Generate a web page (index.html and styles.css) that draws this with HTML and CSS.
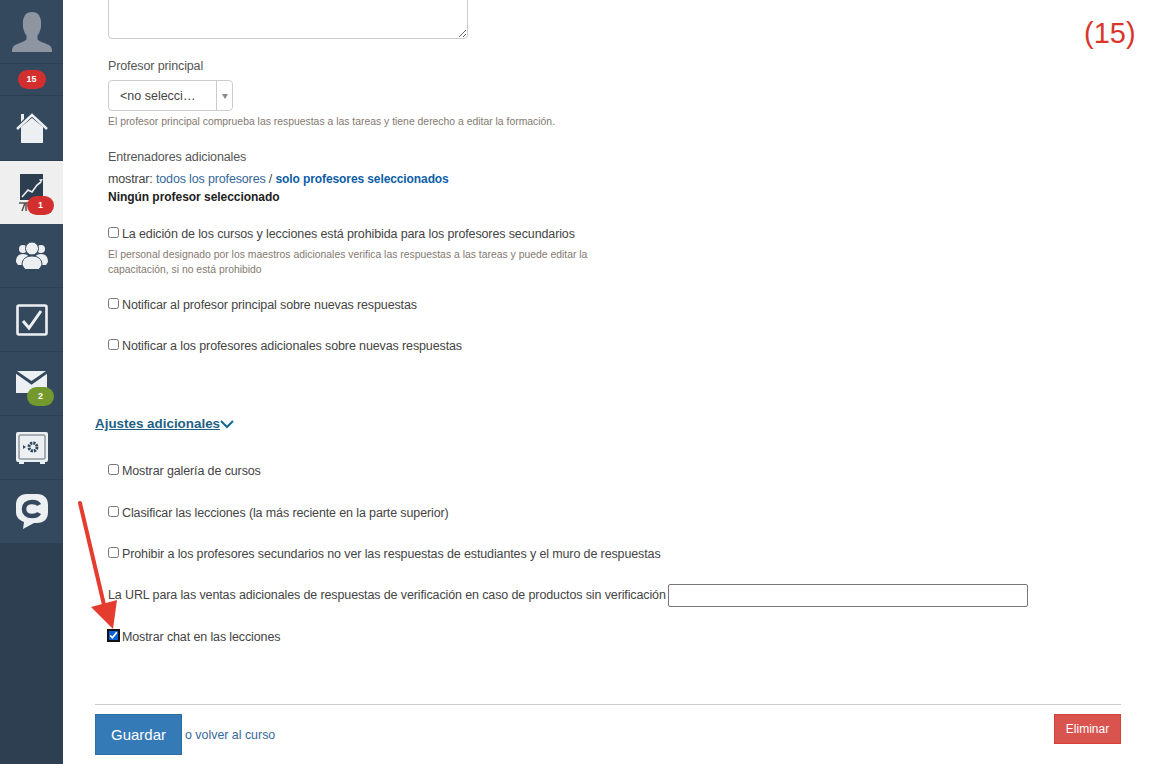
FILE: index.html
```html
<!DOCTYPE html>
<html lang="es">
<head>
<meta charset="utf-8">
<title>Ajustes del curso</title>
<link rel="stylesheet" href="styles.css">
</head>
<body>
<div class="app">
  <nav class="sidebar">
    <a class="nav-item nav-avatar">
      <svg width="42" height="40" viewBox="0 0 46 42" preserveAspectRatio="none"><path fill="#8d96a0" d="M23 0c7 0 10 5 10 12 0 5-1 9-4 13v3c0 3 8 4 13 7 2 1 3 4 3 7H1c0-3 1-6 3-7 5-3 13-4 13-7v-3c-3-4-4-8-4-13C13 5 16 0 23 0z"/></svg>
    </a>
    <a class="nav-item nav-count"><span class="badge badge-red badge-small">15</span></a>
    <a class="nav-item nav-home">
      <svg width="32" height="32" viewBox="0 0 32 32"><path fill="#edf0f2" d="M5 15 16 6l11 9v16H5z"/><path fill="none" stroke="#edf0f2" stroke-width="2.400" d="M1 17 16 3l15 14"/><path fill="#edf0f2" d="M5 2h3v5l-3 3z"/></svg>
    </a>
    <a class="nav-item nav-active">
      <svg width="26" height="38" viewBox="0 0 26 38"><path fill="#2c3e50" d="M1 0h23v26H1z"/><path fill="none" stroke="#edf0f2" stroke-width="1.600" d="m3 23 6-7 4 2 5-7 4-3"/><path fill="#edf0f2" d="m24 5-4 .5 2 3z"/><path fill="none" stroke="#555" stroke-width="1.500" d="M0 29h24M6 29l-3 8M7 29v8"/></svg>
      <span class="badge badge-red badge-over">1</span>
    </a>
    <a class="nav-item">
      <svg width="32" height="28" viewBox="0 0 32 28"><g fill="#edf0f2"><circle cx="7" cy="7" r="4"/><circle cx="25" cy="7" r="4"/><path d="M0 20c0-5 2-8 7-8s7 3 7 8l-2 3H2zM18 20c0-5 2-8 7-8s7 3 7 8l-2 3H20z"/></g><circle cx="16" cy="6.500" r="6.500" fill="#edf0f2" stroke="#34495e" stroke-width="1"/><path fill="#edf0f2" stroke="#34495e" d="M6 23c0-6 4-9 10-9s10 3 10 9l-3 4.500H9z"/></svg>
    </a>
    <a class="nav-item">
      <svg width="32" height="32" viewBox="0 0 32 32"><rect x="1.500" y="1.500" width="29" height="29" rx="1.500" fill="none" stroke="#edf0f2" stroke-width="2.600"/><path fill="none" stroke="#edf0f2" stroke-width="3" d="m7 17 6 7L25 7"/></svg>
    </a>
    <a class="nav-item">
      <svg class="mail-icon" width="31" height="22" viewBox="0 0 32 24" preserveAspectRatio="none"><path fill="#edf0f2" d="M0 3v21h32V3L16 15z"/><path fill="#edf0f2" d="M1 0h30L16 11z"/></svg>
      <span class="badge badge-green badge-over">2</span>
    </a>
    <a class="nav-item">
      <svg width="32" height="32" viewBox="0 0 32 32"><rect y="0" width="32" height="30" rx="2" fill="#edf0f2"/><rect x="3" y="3" width="26" height="24" rx="1" fill="none" stroke="#5b6b7b" stroke-width="1"/><circle cx="17" cy="15" r="4" fill="none" stroke="#34495e" stroke-width="3" stroke-dasharray="2.200 .9"/><path fill="#34495e" d="m7 13 3 2-3 2z"/><path fill="#edf0f2" d="M3 30h5v2H3zM24 30h5v2h-5z"/></svg>
    </a>
    <a class="nav-item">
      <svg width="32" height="35" viewBox="0 0 32 35"><path fill="#edf0f2" d="M11 0h10c7 0 11 4 11 11v7c0 7-4 11-11 11h-3l-11 6 1-7c-5-2-8-5-8-10v-7C0 4 4 0 11 0z"/><path fill="none" stroke="#34495e" stroke-width="4.600" d="M23 11c-1-2-3-3-7-3-5 0-8 3-8 7s3 7 8 7c4 0 6-1 7-3"/></svg>
    </a>
  </nav>

  <main class="content">
    <div class="annotation-number">(15)</div>
    <svg class="annotation-arrow" width="44" height="136" viewBox="0 0 44 136"><path fill="none" stroke="#e53c30" stroke-width="4" stroke-linecap="round" d="M3 6 28 112"/><path fill="#e53c30" d="m14 110 26-7-4 29z"/></svg>

    <div class="indented">
      <div class="textarea-clip"><textarea class="textarea"></textarea></div>

      <div class="field-label label-teacher">Profesor principal</div>
      <div class="select"><span class="select-value">&lt;no selecci…</span><span class="select-arrow"></span></div>
      <p class="hint">El profesor principal comprueba las respuestas a las tareas y tiene derecho a editar la formación.</p>

      <div class="field-label label-extra">Entrenadores adicionales</div>
      <div class="show-line">mostrar: <a class="link">todos los profesores</a> / <a class="link-strong">solo profesores seleccionados</a></div>
      <div class="none-selected">Ningún profesor seleccionado</div>

      <label class="check check-forbid"><input type="checkbox">La edición de los cursos y lecciones está prohibida para los profesores secundarios</label>
      <p class="hint hint-wrap">El personal designado por los maestros adicionales verifica las respuestas a las tareas y puede editar la capacitación, si no está prohibido</p>
      <label class="check check-main"><input type="checkbox">Notificar al profesor principal sobre nuevas respuestas</label>
      <label class="check check-next"><input type="checkbox">Notificar a los profesores adicionales sobre nuevas respuestas</label>
    </div>

    <h3 class="section-toggle"><a class="section-link">Ajustes adicionales</a><svg width="14" height="9" viewBox="0 0 14 9"><path fill="none" stroke="#0f6a94" stroke-width="2" d="m1 1 6 6 6-6"/></svg></h3>

    <div class="indented extra-options">
      <label class="check"><input type="checkbox">Mostrar galería de cursos</label>
      <label class="check check-next2"><input type="checkbox">Clasificar las lecciones (la más reciente en la parte superior)</label>
      <label class="check check-next3"><input type="checkbox">Prohibir a los profesores secundarios no ver las respuestas de estudiantes y el muro de respuestas</label>
      <div class="url-row"><span class="url-label">La URL para las ventas adicionales de respuestas de verificación en caso de productos sin verificación</span><input class="url-input" type="text"></div>
      <label class="check check-chat"><input class="focused" type="checkbox" checked>Mostrar chat en las lecciones</label>
    </div>

    <footer class="actions">
      <button class="btn-save" type="button">Guardar</button>
      <span class="back">o <a class="link">volver al curso</a></span>
      <button class="btn-delete" type="button">Eliminar</button>
    </footer>
  </main>
</div>
</body>
</html>
```

FILE: styles.css
```css
* { box-sizing: border-box; }
html, body { margin: 0; height: 100%; overflow: hidden; background: #fff; }
body { font-family: "Liberation Sans", Arial, sans-serif; font-size: 12.500px; letter-spacing: -0.12px; line-height: 18px; color: #444; }

.app { display: flex; height: 764px; }

.sidebar { flex: 0 0 63px; background: #2e3f51; display: flex; flex-direction: column; }
.nav-item { position: relative; flex: 0 0 64px; display: flex; align-items: center; justify-content: center; background: #34495e; border-bottom: 1px solid #2c3e50; }
.nav-avatar { flex-basis: 64px; padding-top: 1px; }
.nav-count { flex-basis: 32px; }
.nav-home { flex-basis: 65px; }
.nav-active { flex-basis: 63px; background: #efefef; border-bottom: 0; }
.mail-icon { margin-top: -4px; }

.badge { display: flex; align-items: center; justify-content: center; border-radius: 10px; color: #fff; font-size: 9px; font-weight: 700; line-height: 1; letter-spacing: 0; }
.badge-small { width: 28px; height: 19px; }
.badge-red { background: #d32f2f; }
.badge-green { background: #74992e; }
.badge-over { position: absolute; left: 27px; top: 35px; width: 27px; height: 19px; }

.content { position: relative; flex: 1; padding-left: 32px; padding-right: 47px; min-width: 0; }
.indented { padding-left: 13px; }

.annotation-number { position: absolute; left: 1021px; top: 15px; font-size: 29px; line-height: 36px; letter-spacing: 0; color: #d9362b; }
.annotation-arrow { position: absolute; left: 14px; top: 497px; z-index: 2; pointer-events: none; }

.textarea-clip { height: 39px; overflow: hidden; display: flex; align-items: flex-end; }
.textarea { display: block; width: 360px; height: 60px; flex: none; border: 1px solid #ccc; border-radius: 4px; background: #fff; }

.field-label { color: #555; }
.label-teacher { margin-top: 18px; }
.select { display: flex; width: 125px; height: 31px; margin-top: 5px; border: 1px solid #ccc; border-radius: 4px; color: #444; font-size: 12.500px; letter-spacing: 0; align-items: center; }
.select-value { flex: 1; padding-left: 11px; white-space: nowrap; }
.select-arrow { position: relative; flex: 0 0 16px; height: 100%; border-left: 1px solid #ccc; }
.select-arrow::after { content: ""; position: absolute; left: 5px; top: 13px; border: 3px solid transparent; border-top: 5px solid #888; border-bottom: 0; }

.hint { margin: 0; font-size: 10.400px; letter-spacing: 0; line-height: 15px; color: #84796f; }
.select + .hint { margin-top: 3px; }
.hint-wrap { width: 500px; margin-top: 4px; }

.label-extra { margin-top: 19px; }
.show-line { margin-top: 4px; letter-spacing: -0.15px; }
.link { color: #35689a; }
.link-strong { color: #0c5ea8; font-weight: 700; font-size: 12px; letter-spacing: -0.1px; }
.none-selected { color: #222; font-weight: 700; font-size: 12px; letter-spacing: -0.04px; }

.check { display: flex; align-items: center; color: #444; }
.check input { width: 11px; height: 11px; margin: 0 3px 3px 0; flex: none; accent-color: #0a5fd7; }
.check input.focused { outline: 2px solid #111; outline-offset: -1px; border-radius: 3px; }
.check-forbid { margin-top: 19px; }
.check-main { margin-top: 19px; }
.check-next { margin-top: 23px; }
.check-next2 { margin-top: 24px; }
.check-next3 { margin-top: 23px; }

.section-toggle { margin: 60px 0 0; height: 18px; font-size: 13.400px; letter-spacing: 0; line-height: 18px; font-weight: 700; display: flex; align-items: center; }
.section-link { color: #1e5f85; text-decoration: underline; }
.extra-options { padding-top: 29px; }

.url-row { display: flex; align-items: center; gap: 2px; margin-top: 21px; white-space: nowrap; }
.url-label { margin-bottom: 2px; }
.url-input { width: 360px; height: 23px; border: 1px solid #767676; border-radius: 2px; background: #fff; }
.check-chat { margin-top: 21px; }

.actions { display: flex; align-items: center; margin-top: 58px; padding-top: 9px; border-top: 1px solid #ccc; }
.btn-save { width: 87px; height: 41px; border: 1px solid #2e6da4; background: #337ab7; color: #fff; font: 15px "Liberation Sans", Arial, sans-serif; }
.back { margin-left: 3px; color: #35689a; font-size: 12.400px; letter-spacing: 0; }
.btn-delete { width: 67px; height: 30px; margin-left: auto; border: 1px solid #d43f3a; background: #d9534f; color: #fff; font: 12px "Liberation Sans", Arial, sans-serif; margin-top: -11px; }
```
